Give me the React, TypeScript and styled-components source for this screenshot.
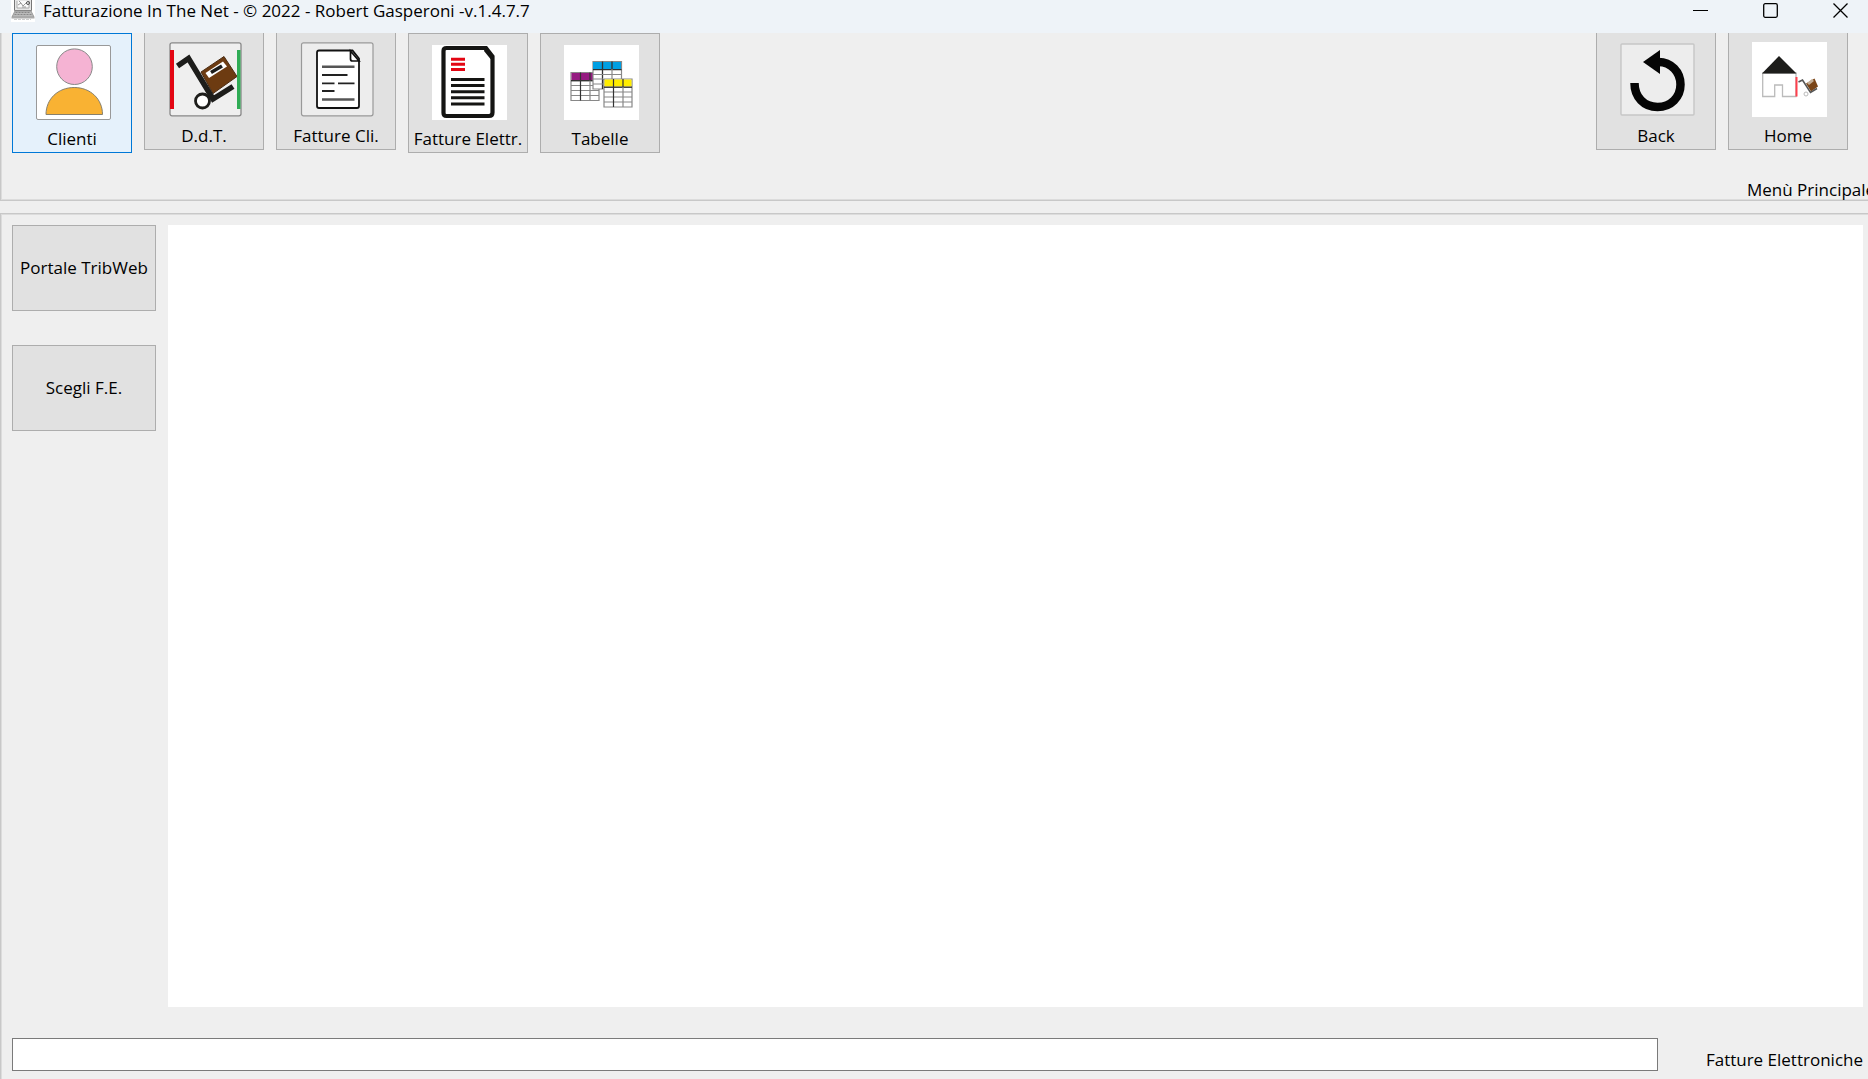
import React from "react";
import styled, { createGlobalStyle } from "styled-components";

const GlobalStyle = createGlobalStyle`
  *, *::before, *::after { box-sizing: border-box; }
  body {
    margin: 0;
    background: #efefef;
    color: #000;
    font-family: "Open Sans", "Noto Sans", sans-serif;
    font-size: 17px;
    line-height: 24px;
  }
  button, input { font: inherit; color: inherit; }
`;

const Window = styled.div`
  display: flex;
  flex-direction: column;
  height: 100vh;
  overflow: hidden;
`;

const TitleBar = styled.header`
  display: flex;
  flex: none;
  justify-content: space-between;
  height: 33px;
  padding: 0 12px 0 11px;
  background: #eef3f8;
`;

const TitleGroup = styled.div`
  display: flex;
  gap: 8px;
`;

const Title = styled.h1`
  margin: 0;
  font-size: 17px;
  font-weight: 400;
  line-height: 22px;
  white-space: nowrap;
`;

const WindowControls = styled.div`
  display: flex;
  gap: 39px;
`;

const WindowButton = styled.button`
  display: flex;
  align-items: center;
  justify-content: center;
  width: 31px;
  height: 21px;
  padding: 0;
  border: 0;
  background: transparent;
`;

const TopPanel = styled.section`
  display: flex;
  flex: none;
  flex-direction: column;
  justify-content: space-between;
  height: 168px;
  padding-left: 11px;
  border: solid #c8c8c8;
  border-width: 0 0 1px 1px;
  box-shadow: inset 1px -1px 0 #dcdcdc;
  overflow: hidden;
`;

const Toolbar = styled.nav`
  display: flex;
  justify-content: space-between;
  padding-right: 20px;
`;

const ToolGroup = styled.div`
  display: flex;
  align-items: flex-start;
  gap: 12px;
`;

const ToolButton = styled.button<{ $active?: boolean; $raised?: boolean }>`
  display: flex;
  flex-direction: column;
  align-items: center;
  gap: 7px;
  width: 120px;
  height: 120px;
  margin-top: ${(p) => (p.$raised ? "-3px" : "0")};
  padding: 11px 0 0;
  border: 1px solid ${(p) => (p.$active ? "#0078d7" : "#adadad")};
  background: ${(p) => (p.$active ? "#e5f1fb" : "#e1e1e1")};
  white-space: nowrap;

  svg { display: block; flex: none; margin-left: 3px; }
`;

const MenuName = styled.div`
  align-self: flex-end;
  width: 121px;
  line-height: 20px;
  white-space: nowrap;
`;

const BodyPanel = styled.main`
  display: grid;
  flex: 1;
  grid-template-rows: 1fr auto;
  row-gap: 31px;
  min-height: 0;
  margin-top: 12px;
  padding: 11px 5px 8px 11px;
  border: solid #c8c8c8;
  border-width: 1px 0 0 1px;
  box-shadow: inset 1px 1px 0 #dcdcdc;
`;

const Workspace = styled.div`
  display: flex;
  gap: 12px;
`;

const SideBar = styled.aside`
  display: flex;
  flex: none;
  flex-direction: column;
  gap: 34px;
  width: 144px;
`;

const SideButton = styled.button`
  height: 86px;
  padding: 0;
  border: 1px solid #adadad;
  background: #e1e1e1;
  white-space: nowrap;
`;

const Content = styled.section`
  flex: 1;
  background: #fff;
`;

const StatusBar = styled.footer`
  display: flex;
  align-items: flex-end;
  gap: 48px;
`;

const PathInput = styled.input`
  flex: 1;
  min-width: 0;
  height: 33px;
  padding: 0 6px;
  border: 1px solid #7a7a7a;
  border-radius: 0;
  background: #fff;
`;

const StatusLabel = styled.label`
  flex: none;
  line-height: 22px;
  white-space: nowrap;
`;

const LaptopIcon = () => (
  <svg width="24" height="22" viewBox="0 0 24 22" aria-hidden="true">
    <path d="M0 0h24v22H0z" fill="#fff" />
    <path d="M3.500 0v10.500h17V0" fill="#e6e6e6" stroke="#777" />
    <path d="M6 1v7h12V1" fill="#fafafa" stroke="#aaa" />
    <path d="M7 5l3-2 2 3 4-4M8 1l2 2M11 7h4" stroke="#999" fill="none" />
    <circle cx="17" cy="3" r="1.500" fill="none" stroke="#555" />
    <path d="M4 11h16l3 6H1z" fill="#bbb" stroke="#999" />
    <path d="M4.500 12.500h15M3.500 14.500h17" stroke="#888" strokeDasharray="2 1" />
    <path d="M.5 17h23v1.500H.5z" fill="#aaa" />
    <path d="M3 19.500h17" stroke="#ccc" strokeDasharray="3 1" />
  </svg>
);

const ClientIcon = () => (
  <svg width="75" height="75" viewBox="0 0 75 75" aria-hidden="true">
    <rect x=".5" y=".5" width="74" height="74" rx="1.500" fill="#fff" stroke="#999" />
    <circle cx="38.500" cy="21.700" r="17.800" fill="#f5b3d3" stroke="#888" />
    <path d="M10 69.500C10 54 22 42.500 38.200 42.500S66.500 54 66.500 69.500z" fill="#f9b233" stroke="#88806c" />
  </svg>
);

const TrolleyIcon = () => (
  <svg width="75" height="75" viewBox="0 0 75 75" aria-hidden="true">
    <rect x="2" y=".8" width="71" height="73" rx="2" fill="#efefef" stroke="#888" strokeWidth="1.300" />
    <path d="M33 30l23-15.500 13 20-24 17z" fill="#6d3b11" stroke="#4b2c13" />
    <path d="M37.500 31l17.500-11.500 4 5-18 11.500z" fill="#fff" />
    <path d="M43 30.500l11-6.500" stroke="#1d1d1b" strokeWidth="3.500" />
    <path d="M9.500 24L20.500 16.500 45 57 65 44.500" fill="none" stroke="#1d1d1b" strokeWidth="5.500" />
    <circle cx="34.500" cy="59" r="7" fill="#fff" stroke="#1d1d1b" strokeWidth="2.800" />
    <path d="M2 8h4v59H2z" fill="#e30613" />
    <path d="M69 8h3.500v59H69z" fill="#2fac55" />
  </svg>
);

const InvoiceIcon = () => (
  <svg width="75" height="75" viewBox="0 0 75 75" aria-hidden="true">
    <rect x="1.500" y=".8" width="71.500" height="73" rx="2" fill="#ededed" stroke="#999" strokeWidth="1.200" />
    <path d="M19 8.500h33.500l6.500 8V64q0 2-2 2H19q-2 0-2-2V10.500q0-2 2-2z" fill="#fff" stroke="#111" strokeWidth="1.800" />
    <path d="M50.500 9v8q0 2 2 2H59z" fill="#fff" stroke="#111" strokeWidth="1.700" />
    <path d="M22 24.700h32.500M22 57.500h32.500" stroke="#555" strokeWidth="2.500" />
    <path d="M22 33h25.500M22 41.300h12.500M38 41.300h16.500M22 49h12.500" stroke="#222" strokeWidth="1.800" />
  </svg>
);

const ElectronicInvoiceIcon = () => (
  <svg width="75" height="75" viewBox="0 0 75 75" aria-hidden="true">
    <path d="M0 0h75v75H0z" fill="#fff" />
    <path d="M13.500 3H54l6.500 8.500v56Q60.500 71 57 71H14.500Q11.500 71 11.500 68V6q0-3 3-3z" fill="#fff" stroke="#151513" strokeWidth="4.200" />
    <path d="M53 2l9 12h-3.500L52 6z" fill="#151513" />
    <path d="M19 14.200h14M19 19.300h14M19 24.400h14" stroke="#e30613" strokeWidth="3" />
    <path d="M19 34.500h33.500M19 40.500h33.500M19 46.700h33.500M19 52.800h33.500M19 59h33.500" stroke="#151513" strokeWidth="3" />
  </svg>
);

const MiniTable = ({ x, y, color }: { x: number; y: number; color: string }) => (
  <g transform={`translate(${x} ${y})`}>
    <path d="M0 0h28v28H0z" fill="#fff" stroke="#888" strokeWidth="1.200" />
    <path d="M.5.500h27v7H.5z" fill={color} />
    <path d="M0 8.200h28" stroke="#333" strokeWidth="1.400" />
    <path d="M0 13h28M0 18h28M0 23h28M19 8v20" stroke="#888" strokeWidth="1.200" />
    <path d="M9.500 0v28M19 0v8" stroke="#333" strokeWidth="1.200" />
  </g>
);

const TablesIcon = () => (
  <svg width="75" height="75" viewBox="0 0 75 75" aria-hidden="true">
    <path d="M0 0h75v75H0z" fill="#fff" />
    <MiniTable x={7} y={27.500} color="#951b81" />
    <path d="M29 16.500h28.500v18H39v9.500H29z" fill="#fff" stroke="#888" strokeWidth="1.200" />
    <path d="M29 17h28v7.500H29z" fill="#009fe3" />
    <path d="M29 24.700h28.500M38.500 16.500V44M48 16.500v8" fill="none" stroke="#333" strokeWidth="1.300" />
    <path d="M29 29.500h28.500M29 34h10M29 39h10M48 24v10" fill="none" stroke="#888" strokeWidth="1.200" />
    <MiniTable x={40} y={34} color="#ffed00" />
  </svg>
);

const BackIcon = () => (
  <svg width="75" height="75" viewBox="0 0 75 75" aria-hidden="true">
    <rect x="1" y="2" width="73" height="71" rx="1" fill="#ededed" stroke="#c6c6c6" strokeWidth="1.400" />
    <path d="M14.500 41C14.500 55 24 65 37.500 65 51 65 60.500 55 60.500 42.500 60.500 30 51 20 38.500 20" fill="none" stroke="#050505" strokeWidth="8.500" />
    <path d="M23 20L40 8v24z" fill="#050505" />
  </svg>
);

const HomeIcon = () => (
  <svg width="75" height="75" viewBox="0 0 75 75" aria-hidden="true">
    <path d="M0 0h75v75H0z" fill="#fff" />
    <path d="M10.700 31v23.500h12V43h7.800v11.500H44V31z" fill="#fff" stroke="#bbb" strokeWidth="1.300" />
    <path d="M10 31.500L27 14l17.500 17.500z" fill="#1d1d1b" />
    <path d="M43.500 35h2v19.500h-2z" fill="#ff3f4c" />
    <path d="M54 41.500l8.500-5 3.500 8-7 5z" fill="#7a4517" />
    <path d="M55 41l5-4 2 2-5 4z" fill="#c3ad95" />
    <path d="M46.500 40l4-2 8 12.500 6.500-4" fill="none" stroke="#555" strokeWidth="1.600" />
    <circle cx="54" cy="52" r="2" fill="#fff" stroke="#bbb" />
  </svg>
);

export default function App() {
  return (
    <Window>
      <GlobalStyle />
      <TitleBar>
        <TitleGroup>
          <LaptopIcon />
          <Title>Fatturazione In The Net - © 2022 - Robert Gasperoni -v.1.4.7.7</Title>
        </TitleGroup>
        <WindowControls>
          <WindowButton aria-label="Riduci a icona">
            <svg width="15" height="15" viewBox="0 0 15 15"><path d="M0 7.500h15" stroke="#000" /></svg>
          </WindowButton>
          <WindowButton aria-label="Ingrandisci">
            <svg width="15" height="15" viewBox="0 0 15 15">
              <rect x=".7" y=".7" width="13.600" height="13.600" rx="1.500" fill="none" stroke="#000" strokeWidth="1.300" />
            </svg>
          </WindowButton>
          <WindowButton aria-label="Chiudi">
            <svg width="15" height="15" viewBox="0 0 15 15">
              <path d="M.5.500l14 14M14.500.500l-14 14" stroke="#000" strokeWidth="1.300" />
            </svg>
          </WindowButton>
        </WindowControls>
      </TitleBar>

      <TopPanel>
        <Toolbar>
          <ToolGroup>
            <ToolButton $active><ClientIcon />Clienti</ToolButton>
            <ToolButton $raised><TrolleyIcon />D.d.T.</ToolButton>
            <ToolButton $raised><InvoiceIcon />Fatture Cli.</ToolButton>
            <ToolButton><ElectronicInvoiceIcon />Fatture Elettr.</ToolButton>
            <ToolButton><TablesIcon />Tabelle</ToolButton>
          </ToolGroup>
          <ToolGroup>
            <ToolButton $raised><BackIcon />Back</ToolButton>
            <ToolButton $raised><HomeIcon />Home</ToolButton>
          </ToolGroup>
        </Toolbar>
        <MenuName>Menù Principale</MenuName>
      </TopPanel>

      <BodyPanel>
        <Workspace>
          <SideBar>
            <SideButton>Portale TribWeb</SideButton>
            <SideButton>Scegli F.E.</SideButton>
          </SideBar>
          <Content />
        </Workspace>
        <StatusBar>
          <PathInput id="document-path" type="text" />
          <StatusLabel htmlFor="document-path">Fatture Elettroniche</StatusLabel>
        </StatusBar>
      </BodyPanel>
    </Window>
  );
}
